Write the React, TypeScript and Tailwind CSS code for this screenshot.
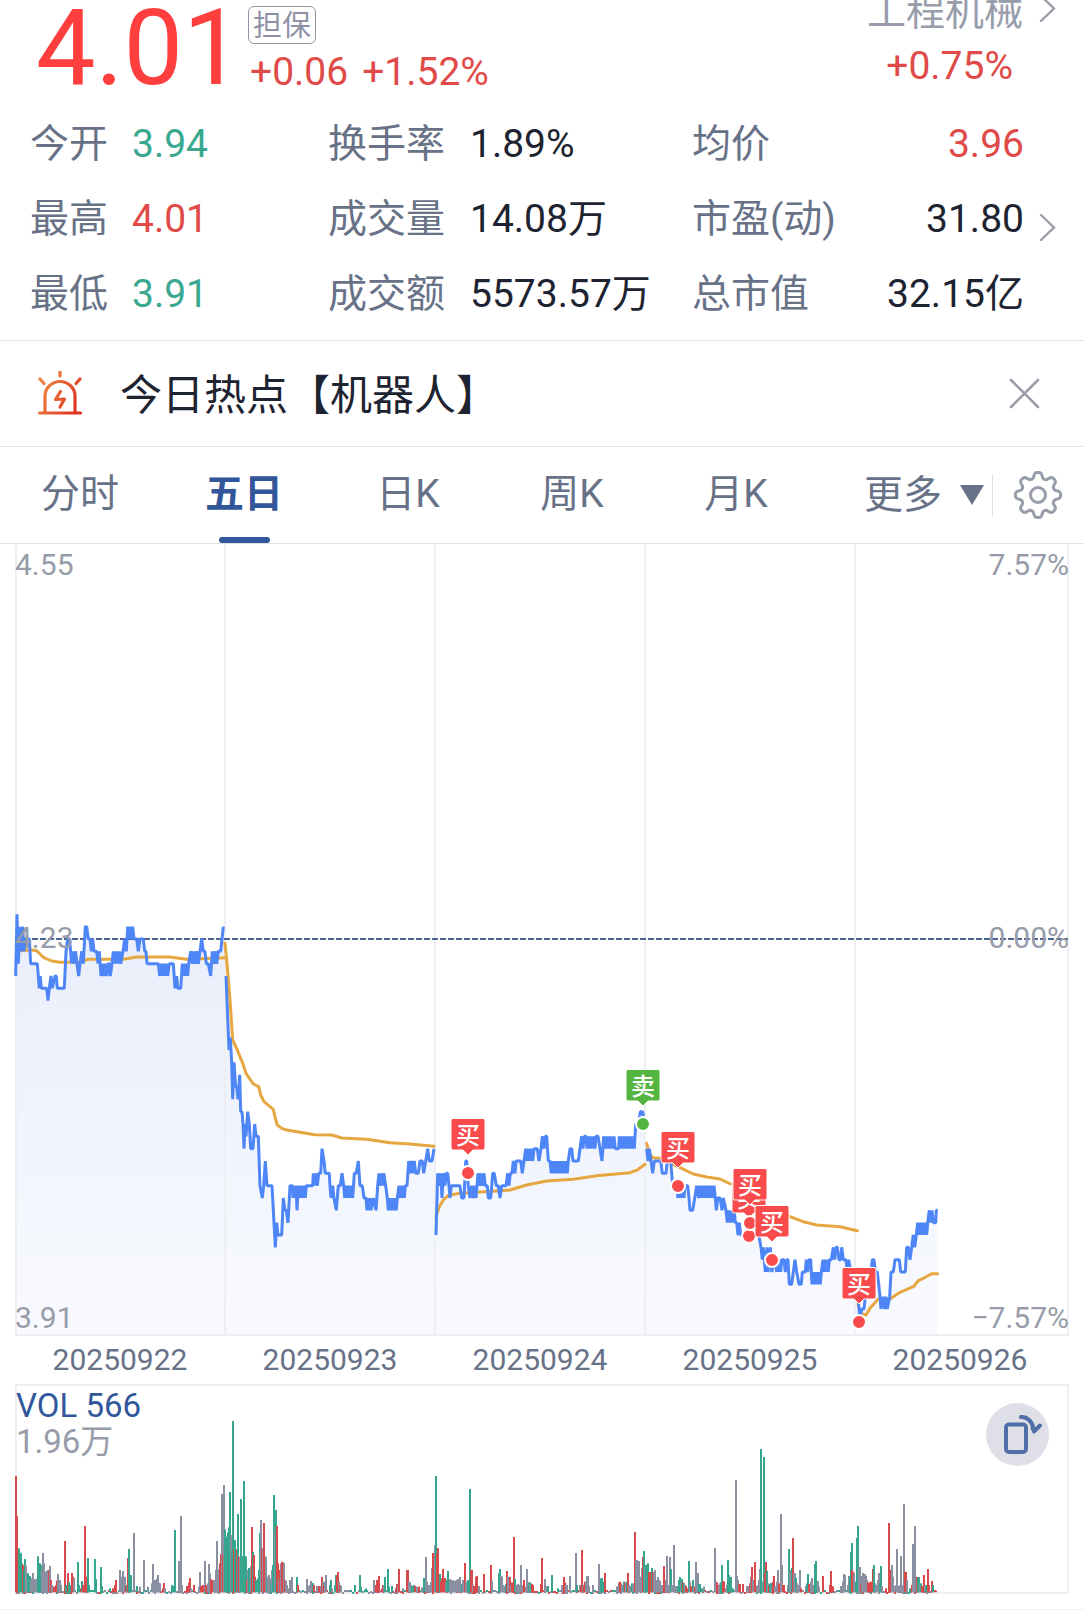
import React from "react";

type Point = [number, number];

const BLUE = "#4f86f7";
const ORANGE = "#e6a740";

/* ---------- price data ---------- */

const TICK = 37 / 3;
const BASE_Y = 939;

// "x,k" is one quote, "x1-x2,a,b" is a stretch that swings between a and b.
// x is counted in thirds of a pixel, k in ticks below the reference price.
function parseDay(origin: number, source: string): Point[] {
  const points: Point[] = [];
  source
    .trim()
    .split(/\s+/)
    .forEach((token) => {
      const [span, a, b] = token.split(",");
      if (span.includes("-")) {
        const [from, to] = span.split("-").map(Number);
        let flip = false;
        for (let x = from; x <= to; x += 3) {
          points.push([origin + x / 3, BASE_Y + Number(flip ? b : a) * TICK]);
          flip = !flip;
        }
      } else {
        points.push([origin + Number(span) / 3, BASE_Y + Number(a) * TICK]);
      }
    });
  return points;
}

const priceDays: Point[][] = [
  parseDay(
    0,
    `47,3 51,m 55,2 60,n 64,1 68,n 72,1 76,0 88,0 92,2 112,2 118,4 121,3 124,4 140,4 144,5 148,4 153,3 157,4 165,3 169,3 172,4
     193,4 198,1 203,0 208,0 212,1 215,2 218,1 222,2 227,1 231,2 236,3 240,2 245,1 250,2 256,n 260,n 265,0 270,0 274,1 278,0 282,1
     290,1 294,2 298,1 303,3 308,2 312,3 316,2 320,3 324,2 328,2 331,3 336,2 340,1 344-364,2,1 369,1 374,0 379,1 383,n 387,0 391,n 395,0 398,n 402,0
     410,0 415,1 420,0 430,0 434,1 438,1 441,2 475,2 479-505,3,2 508,2 520,2 525,4 530,3 533,4 542,4 547,2 551-568,3,2 572,1 577,2 581,1
     585,2 590,1 595,2 600,1 605,0 610,1 615,1 619,2 625,2 632,3 637,1 641,2 646,1 650,2 655,1 662,1 666,0 670,n`
      .replace(/,m/g, ",-2")
      .replace(/,n/g, ",-1"),
  ),
  [
    ...parseDay(
      0,
      `678,3 684,7 687,9 691,8 695,10 698,13 702,10 707,12 710,12 714,13 719,11 722,14 726,14 729,15 732,17 735,15 738,16 743,14 748,15
       752,17 759,17 764,15 768,16 775,16 780,20 787,21 791,20 796,18 801,20 816,20 822,23 826,25 830,23 834,24 845,24`,
    ),
    ...parseDay(
      220,
      `190,21 195,22 199,22 204,23 210,20 217,20 219-228,21,20 231,22 235-260,20,21 262,20 278,20 280,19 284,20 287,19 292,20 296,19 302,19
       306,17 312,18 316,19 328,19 330,20 333,21 338,20 342,21 349,22 355,20 361,20 366,19 371,20 374-400,21,20 403,19 409,19 415,18
       420,20 427,20 432,21 438,21 441-455,22,21 460,21 468,22 473,20 477,19 481,20 485,19 488,20 491,19 497,20 502,21 505-533,22,21
       537,20 541-556,21,20 561,20 566,18 571,19 575,18 579,19 583,18 587,19 595,19 600,18 607,18 611,19 617,18 623,17 628,18 636,18 642,17`,
    ),
  ],
  parseDay(
    430,
    `18,24 23,19 28,20 32,19 36,21 40,19 45,20 49,19 53,19 57,20 60,21 64,20 90,20 95,21 102,21 107,18 110,18 115,20 120,21 125,20
     130,21 134,20 138,21 144,19 149,20 153,19 157,20 162,19 166,20 172,20 175,21 182,21 188,19 193,19 199,20 205,20 210,21 215,20
     228,20 233,19 237,20 241,19 246,19 250,18 255,19 258,18 272,18 277,19 282,18 287-308,17,18 312,17 322,17 327,18 333,17 337,16
     342,17 346,16 350,16 355,18 360,18 364-417,19,18 420,17 425,17 429,18 445,18 450,17 455,16 459,17 463,16 468-500,16,17 504,16
     510,17 516,18 521,16 525-553,17,16 556,17 566,17 568-614,16,17 617,15 626,15 631,14 638,14 643,15`,
  ),
  parseDay(
    640,
    `20,17 24,18 28,17 33,18 38,19 43,18 62,18 67,19 78,19 82,18 92,18 98,20 110,20 114-135,21,20 138,20 143,20 147,21 150,22 158,22
     164,21 170,20 176,21 180-222,20,21 226,21 229,22 233,21 240,21 246,22 250,21 258,22 262-283,23,22 286,23 290,23 294,24 298,23 302,24
     320,24 340,23 356,24 363,25 367,26 370,25 376,27 381,25 384,27 391,25 395,27 405,26 410-427,27,26 432,26 436,27 440,26 444,26
     448,28 455,28 460,27 465,26 470,27 477,28 484,28 487,27 496,27 499,26 503,27 507,26 512,26 516,28 520-545,27,28 549,26 553-570,27,26
     574,26 580,25 584,26 588,25 592,25 597,26 602,26 605,25 610,26 618,26 622,27 626,26 632,27 645,28`,
  ),
  parseDay(
    640,
    `655,29 657,30 660,31 665,30 672,30 676,29 684,28 690,28 697,26 702,26 706,27 712,27 716,28 720,29 723,30 730,29 734,30 738,29
     742,30 749,29 753,27 760,27 765,26 778,26 782,27 796,27 800,25 805,25 810,26 815,25 820,24 824,25 829,24 833-863,23,24 868,22
     872,23 876,22 880,23 887,23 889,22 893,22`,
  ),
];

function scaled(ox: number, oy: number, pairs: Point[]): Point[] {
  return pairs.map(([x, y]) => [ox + x / 3, oy + y / 3]);
}

const averageLines: Point[][] = [
  scaled(0, 880, [
    [50, 190], [65, 212], [90, 209], [110, 212], [130, 232], [155, 243], [180, 247], [240, 246], [265, 238],
    [370, 238], [410, 231], [510, 231], [560, 238], [600, 236], [675, 233],
  ]),
  [
    ...scaled(0, 880, [
      [675, 190], [680, 240], [690, 360], [698, 480], [712, 510], [728, 550], [738, 580], [760, 612], [776, 620],
      [782, 645], [792, 665], [820, 688], [826, 715], [832, 735], [845, 745], [860, 750], [900, 757],
    ]),
    ...scaled(220, 1080, [[285, 164], [335, 165], [365, 174], [440, 178], [510, 188], [570, 192], [642, 199]]),
  ],
  scaled(430, 1050, [
    [18, 500], [28, 470], [40, 450], [55, 436], [90, 430], [200, 423], [240, 420], [290, 405], [350, 393],
    [430, 388], [500, 377], [600, 368], [622, 360], [645, 343],
  ]),
  scaled(640, 1100, [[20, 130], [28, 160], [38, 173], [62, 175], [125, 205], [160, 222], [200, 231], [240, 237], [272, 252]]),
  scaled(640, 1100, [[430, 342], [450, 350], [490, 365], [530, 375], [600, 380], [652, 392]]),
  scaled(640, 1100, [
    [654, 610], [660, 640], [678, 645], [690, 625], [715, 597], [750, 597], [780, 577], [820, 560], [835, 542],
    [850, 535], [875, 521], [893, 521],
  ]),
];

const toPath = (points: Point[]) =>
  points.map(([x, y], i) => `${i ? "L" : "M"}${x.toFixed(1)} ${y.toFixed(1)}`).join("");

const allQuotes = priceDays.flat();
const areaPath = `${toPath(allQuotes)}V1334H16Z`;

const markers = [
  { x: 468, y: 1173, label: "买" },
  { x: 643, y: 1124, label: "卖" },
  { x: 678, y: 1186, label: "买" },
  { x: 749, y: 1236, label: "买" },
  { x: 750, y: 1223, label: "买" },
  { x: 772, y: 1260, label: "买" },
  { x: 859, y: 1322, label: "买" },
];

function Marker({ x, y, label }: { x: number; y: number; label: string }) {
  const fill = label === "卖" ? "#55b541" : "#f94b4b";
  return (
    <g transform={`translate(${x} ${y})`}>
      <path
        d="M-15-54.5H15Q17-54.5 17-52.5V-25Q17-23 15-23H5L0-18L-5-23H-15Q-17-23-17-25V-52.5Q-17-54.5-15-54.5Z"
        fill={fill}
        stroke="#fff"
        strokeWidth="1"
      />
      <text x="0" y="-29" textAnchor="middle" fontSize="24" fontWeight="500" fill="#fff">
        {label}
      </text>
      <circle r="7" fill={fill} stroke="#fff" strokeWidth="2" />
    </g>
  );
}

function PriceChart() {
  return (
    <svg viewBox="0 544 1084 792" className="block w-full" role="img" aria-label="五日走势图">
      <defs>
        <linearGradient id="area" gradientUnits="userSpaceOnUse" x1="0" y1="920" x2="0" y2="1334">
          <stop offset="0" stopColor="#e8eefa" />
          <stop offset="1" stopColor="#f9faff" />
        </linearGradient>
      </defs>
      <path d={areaPath} fill="url(#area)" />
      <path d="M16 545V1335M225 545V1335M435 545V1335M645 545V1335M855 545V1335M1068 545V1335M15 1335H1069" stroke="#eeeff2" strokeWidth="2" fill="none" />
      <path d="M16 939H1068" stroke="#4a6494" strokeWidth="2" strokeDasharray="6 2" />
      {averageLines.map((line, i) => (
        <path key={i} d={toPath(line)} fill="none" stroke={ORANGE} strokeWidth="3" strokeLinejoin="round" strokeLinecap="round" />
      ))}
      {priceDays.map((day, i) => (
        <path key={i} d={toPath(day)} fill="none" stroke={BLUE} strokeWidth="3" strokeLinejoin="bevel" />
      ))}
      {markers.map((m) => (
        <Marker key={`${m.x}-${m.y}`} {...m} />
      ))}
    </svg>
  );
}

/* ---------- volume data ---------- */

// Each bar: x in thirds of a pixel, direction (r up, g down, n flat), top edge.
const volumeParts: [number, string][] = [
  [
    0,
    `48r438 51r558 54r690 57g655 60g668 63g670 66g700 69r705 72g720 75g687 78n708 81n730 84g730 87g740 90g738 93n750 96n745 99n729
     102n747 105n748 108n750 111n745 114g679 117g700 120g700 123g705 126n720 129n669 132n700 135n738 138n725 141n722 144n720 147r722
     150n708 153r750 156n765 162r770 168r765 171r752 174n732 177n750 180n750 183n765 195r633 198g765 204r729 207g757 213g765 216r729
     219r740 222n744 234g696 237g765 243r775 246g753 249r765 255r588 258r740 264g684 267g765 285g687 288g747 303g711 306g768 330g775
     339r775 345r765 348r750 360n720 366n740 369n723 372n740 375n741 378r768 381g765 384r684 387g657 390g735 393g735 402n609 411g768
     420n770 432n690 444n770 456n760 459n702 462n750 465n760 468n750 471n745 474n735 477n758 480n760 489r775 492r759 495n775 516g765
     519g770 522g768 525g600 537n693 540n693 543n558 546n765 561r768 567r758 570r744 573n775 582r765 597n770 600n726 603r768 606r768
     609r765 615n693 618r765 624n760 627n702 630n730 633r748 636r750 642n750 648n720 651n633 654n720 657n718 660r700 663r672 666n492
     669r672 672n465 675g598 678g620 681g640 684g608 687g592 690g486 693n615 696g660 699g273 702r657 705g630 708g657 711r660 714g552
     717r680 720n682 723g507 726g678 729g680 732g453 735g678 738g680 741r750 744n720 747g714 750g715 753n708 756r591 759g666 762r675
     765r740 768g750 774g745 777g720 780g609 783n570 786r655 789n655 792r579 795r680 798n680 801g750 804n740 807n735 810n745 813g760
     816n720 819g705 822g495 825n600 828g540 831r588 834r700 837n745 840r720 843n700 846r696 849r697 852n699 855r750 858n753 861n765
     864n775 870n750 876n741 891g741 894r765 921n747 924n768 930n765 933n753 936n765 939g759 942r765 951n768 957r768 963n768 966r741
     969n755 972r765 975n755 978n735 990g765 993g750 996n775 1005g765 1008g735 1011r738 1014r726 1017n755 1020r765 1023n768 1065g765
     1080g735 1083g770`,
  ],
  [
    1086,
    `12g775 36n750 42r765 45r750 48r750 51r738 60r775 63r765 66n765 69g741 78g717 81g770 90g768 102r775 105r762 108n765 111r717 123n775
     135r720 138r720 141n755 144n757 147n765 150g768 156g765 159r768 165n770 171r770 180n772 186g744 189g745 192n681 195n755 198n765
     204n765 207n757 210n714 213r669 216r675 219n645 222g438 225r672 228r654 231r740 234g732 237r755 240r745 243r717 246r745 249r744
     252n756 255g750 258g723 261g750 264n747 267n750 270n750 273n752 276n752 279n752 282n753 285n750 288n747 291n750 294n741 297n765
     300g762 303n750 306n765 309r699 312n755 315n765 318g750 321g768 324g477 327r720 330r720 333n765 336r768 339r768 342r740 345r738
     351n768 366r732 387r705 390n753 411g729 414g717 417n738 420n740 423n765 426n768 432g762 435r723 438n740 441n762 444r741 447n765
     450r757 453r760 456r621 459g747 462n765 465n768 468n762 471n765 477n705 480n765 486r750 492n770 495n717 498n760 501g757 504n757
     507g760 510r762 513r765 537r762 540r684 549n747 552n768 558g768 570g735 588g775 600n765 603n768 606r741 609r757 612n765 615n765
     624n738 642n669 645g765 654n765 657r768 660r660 663n765 666r765 669r755 672n755 675n738 678n738 681n768 693n765 711n702 717g745
     720g744 726g755 729r729 765n770 768n768 771n757 774r755 777r760 780n765 783n768 786g755 789r758 792n757 795g755 798r729 801n765
     804n768 810g760 813n765 816n760 819r606 822n690 825n690 828n693 831n693 834n750 837n740 840n714 843r681 846g663 849n710 852g705
     855g705 858g700 861r726 864r726 867r730 870g714 873r726 876n728 879n720 882n750 885n765 888n741 891n750 894n753 897n765 903n765
     906r708 909r765 912n750 915n678 918n765 924n681 927g717 930n765 936n645 939n768 945n768 948g768 951g750 954g741 957n755 960g747
     963r757 966g760 969n765 972r768 975r775 981g693 984n755 987r768 993g750 996n770 999r770 1002n696 1005n730 1008n729 1011g762
     1014g762 1020g775 1026n770 1059n654 1062n755 1065r757 1068r765 1071n768 1074n760 1077g757 1080g705`,
  ],
  [
    2166,
    `3r754 6r754 12n775 15n765 18g690 21g735 24g741 27g741 33g775 42n450 45n738 48n750 51r765 54r762 63r762 75n768 81n768 84r760 87n740
     90r711 93n750 99r696 105n768 108n765 111n750 114n717 117g357 120g755 123n755 126g381 129r730 132r696 135g723 138n760 141r768
     144g762 147g759 150n768 153r755 156r738 159n768 165n755 168n720 171r760 177n552 180n705 183r765 186r765 198n765 201g657 204n726
     207n720 210g714 213r624 216n730 219n729 222g744 225n760 228n768 231n765 234n720 237r775 252n768 255g760 258g732 261r762 267n755
     270n744 276n765 279g702 282g693 285g755 288n753 291n770 303r738 324r765 327r723 330r768 333r770 357n768 363n755 366n732 369n735
     378n765 381n738 384g738 387g666 390g639 390r720 393r725 396n729 399n765 402g755 405g624 408g588 411n711 414n711 417r762 420n738
     423n729 426n732 429n732 432n738 435n750 438r757 441r759 444r757 447r755 450r760 453r717 456g705 459g760 462n765 468n750 471n729
     474g760 477g708 480n768 492r775 501r579 504r720 507r720 510n705 513n740 516n768 522n765 525n657 528n768 534n765 537n678 540n765
     546n522 549r725 552r726 555n750 564g775 570r765 573n642 576n645 579n588 582n740 585r741 588g745 591g741 594n762 597g760 600r768
     606r735 609n768 612g765 618r717 621r765 630r753 633g765 642r782`,
  ],
];

const volumeColors: Record<string, string> = { r: "#d9494b", g: "#36a58e", n: "#8a8fa1" };

const volumeBars = volumeParts.flatMap(([offset, source]) =>
  source
    .trim()
    .split(/\s+/)
    .map((token) => {
      const [, x, kind, top] = /(\d+)([rgn])(\d+)/.exec(token) as RegExpExecArray;
      return { x: (offset + Number(x)) / 3 - 1, y: 1330 + Number(top) / 3, kind };
    }),
);

// Thin trades along the base line between the larger bars.
const thinBars = Array.from({ length: 460 }, (_, i) => {
  const seed = (i * 7919 + ((i * i) % 613) * 31) % 101;
  return {
    x: 16 + i * 2,
    y: seed % 3 === 0 ? 1592 : 1590 + (seed % 2),
    kind: "nrgngnrn"[seed % 8],
  };
});

function VolumeChart() {
  return (
    <svg viewBox="0 1384 1084 225" className="block w-full" role="img" aria-label="成交量">
      <path d="M16 1385H1068V1593H16Z" fill="none" stroke="#eeeff2" strokeWidth="2" />
      {thinBars.map((b, i) => (
        <rect key={i} x={b.x} y={b.y} width="2" height="2" fill={volumeColors[b.kind]} />
      ))}
      {volumeBars.map((b, i) => (
        <rect key={i} x={b.x} y={b.y} width="2" height={1592.3 - b.y} fill={volumeColors[b.kind]} />
      ))}
    </svg>
  );
}

/* ---------- icons ---------- */

function Chevron() {
  return (
    <svg width="17" height="29" viewBox="0 0 17 29" fill="none" stroke="#9a9da8" strokeWidth="2.4" strokeLinecap="round" aria-hidden="true">
      <path d="M2 2L15 14.5L2 27" />
    </svg>
  );
}

function SirenIcon() {
  return (
    <svg width="46" height="46" viewBox="0 0 46 46" fill="none" stroke="url(#siren)" strokeWidth="3.2" strokeLinecap="round" strokeLinejoin="round" aria-hidden="true">
      <defs>
        <linearGradient id="siren" gradientUnits="userSpaceOnUse" x1="4" y1="20" x2="42" y2="40">
          <stop offset="0" stopColor="#ee8040" />
          <stop offset="1" stopColor="#dc2f1f" />
        </linearGradient>
      </defs>
      <path d="M2.5 42H43.5M8 41V25A15 14.5 0 0 1 38 25V41M23 0.8V5M3 8L7 12.500M43 8L39 12.500" />
      <path d="M23.5 20.500L18.500 28.500L27.500 28L23 36" />
    </svg>
  );
}

const gearPath =
  Array.from({ length: 145 }, (_, i) => {
    const t = (i / 144) * Math.PI * 2;
    const wave = Math.tanh(1.6 * (Math.cos(8 * t) + 0.1)) / Math.tanh(1.76);
    const r = 19.7 + 2.9 * wave;
    return `${i ? "L" : "M"}${(25 + r * Math.sin(t)).toFixed(2)} ${(25 - r * Math.cos(t)).toFixed(2)}`;
  }).join("") + "Z";

function GearIcon() {
  return (
    <svg width="50" height="50" viewBox="0 0 50 50" fill="none" stroke="#989dab" strokeWidth="3" strokeLinejoin="round" aria-hidden="true">
      <path d={gearPath} />
      <circle cx="25" cy="25" r="7.5" />
    </svg>
  );
}

function RotateIcon() {
  return (
    <svg width="63" height="63" viewBox="0 0 63 63" fill="none" stroke="#4f6fa6" strokeWidth="4" strokeLinecap="round" strokeLinejoin="round" aria-hidden="true">
      <rect x="20" y="21.500" width="20" height="27.500" rx="3" />
      <path d="M35 14C42 13.500 47 19.500 48 28.500L54 22.500M48 28.500L46.500 25" />
    </svg>
  );
}

/* ---------- page ---------- */

const tone = { up: "text-[#e04a48]", down: "text-[#3aa78f]", plain: "text-[#1d2331]" };

const stats: { label: string; value: string; tone: keyof typeof tone }[][] = [
  [
    { label: "今开", value: "3.94", tone: "down" },
    { label: "换手率", value: "1.89%", tone: "plain" },
    { label: "均价", value: "3.96", tone: "up" },
  ],
  [
    { label: "最高", value: "4.01", tone: "up" },
    { label: "成交量", value: "14.08万", tone: "plain" },
    { label: "市盈(动)", value: "31.80", tone: "plain" },
  ],
  [
    { label: "最低", value: "3.91", tone: "down" },
    { label: "成交额", value: "5573.57万", tone: "plain" },
    { label: "总市值", value: "32.15亿", tone: "plain" },
  ],
];

const labelWidths = ["w-[102px]", "w-[142px]", "flex-1"];

const tabs = ["分时", "五日", "日K", "周K", "月K"];
const dates = ["20250922", "20250923", "20250924", "20250925", "20250926"];

export default function App() {
  return (
    <main className="min-h-screen overflow-hidden bg-white font-[Roboto,'Noto_Sans_CJK_SC',sans-serif] text-[39px] leading-[40px] text-[#687287]">
      <section className="border-b border-[#dfe0e3]">
        <div className="flex h-[102px] items-start justify-between pr-7 pl-9">
          <div className="flex items-start">
            <strong className="w-[212px] text-[106px] leading-[96px] font-normal text-[#ff3e3e]">4.01</strong>
            <div className="flex flex-col items-start pt-[6px]">
              <span className="flex h-[38px] items-center rounded-md border border-[#9294a6] px-1 pt-[2px] text-[29px] leading-[30px] text-[#8f92a6]">
                担保
              </span>
              <span className="flex gap-[14px] pt-2 pl-[2px] text-[#e04a48]">
                <span>+0.06</span>
                <span>+1.52%</span>
              </span>
            </div>
          </div>
          <div className="-mt-4 flex flex-col items-end">
            <a href="#sector" className="flex items-center gap-4 text-[#989dab]">
              <span className="pt-2">工程机械</span>
              <Chevron />
            </a>
            <span className="pt-[14px] pr-[43px] text-[#e04a48]">+0.75%</span>
          </div>
        </div>
        <div className="relative pt-1 pb-[9px]">
          {stats.map((row, r) => (
            <dl key={r} className="grid h-[75px] grid-cols-[298fr_364fr_332fr] items-center pr-[60px] pl-[30px]">
              {row.map((item, c) => (
                <div key={item.label} className="flex whitespace-nowrap">
                  <dt className={labelWidths[c]}>{item.label}</dt>
                  <dd className={tone[item.tone]}>{item.value}</dd>
                </div>
              ))}
            </dl>
          ))}
          <button type="button" aria-label="更多行情" className="absolute top-[111px] right-7">
            <Chevron />
          </button>
        </div>
      </section>

      <section className="flex h-[106px] items-center border-b border-[#dfe0e3] pr-11 pl-[37px]">
        <SirenIcon />
        <p className="flex-1 pt-1 pl-[37px] text-[42px] leading-[48px] text-[#1d2331]">今日热点【机器人】</p>
        <button type="button" aria-label="关闭">
          <svg width="31" height="31" viewBox="0 0 31 31" fill="none" stroke="#9a9da8" strokeWidth="2.6" strokeLinecap="round" aria-hidden="true">
            <path d="M2 2L29 29M29 2L2 29" />
          </svg>
        </button>
      </section>

      <nav className="grid h-[97px] grid-cols-[repeat(5,164fr)_172fr_92fr] border-b border-[#dfe0e3]">
        {tabs.map((tab) =>
          tab === "五日" ? (
            <button key={tab} type="button" aria-current="page" className="relative flex items-center justify-center pr-1 pb-[2px] font-bold text-[#31579a]">
              {tab}
              <span className="absolute bottom-0 h-[6px] w-[51px] rounded-full bg-[#31579a]" />
            </button>
          ) : (
            <button key={tab} type="button" className="flex items-center justify-center pr-1 pb-[2px]">
              {tab}
            </button>
          ),
        )}
        <button type="button" className="flex items-center justify-end gap-[18px] pr-2">
          更多
          <svg width="24" height="20" viewBox="0 0 24 20" fill="#687287" aria-hidden="true">
            <path d="M0 0H24L12 20Z" />
          </svg>
        </button>
        <button type="button" aria-label="设置" className="flex items-center">
          <span className="h-[42px] w-px bg-[#dfe0e3]" />
          <span className="flex flex-1 justify-center pr-[2px]">
            <GearIcon />
          </span>
        </button>
      </nav>

      <section className="relative">
        <PriceChart />
        <div className="absolute inset-0 flex flex-col justify-between px-[15px] pt-[3px] text-[30px] leading-[36px] text-[#979caa]">
          <div className="flex justify-between">
            <span>4.55</span>
            <span>7.57%</span>
          </div>
          <div className="flex justify-between pb-2">
            <span>4.23</span>
            <span>0.00%</span>
          </div>
          <div className="flex justify-between">
            <span>3.91</span>
            <span>−7.57%</span>
          </div>
        </div>
      </section>

      <div className="grid h-[48px] grid-cols-5 pr-[19px] pl-[15px] text-center text-[30px] leading-[48px]">
        {dates.map((d) => (
          <time key={d}>{d}</time>
        ))}
      </div>

      <section className="relative border-b border-[#f1f1f3]">
        <VolumeChart />
        <div className="absolute top-1 left-4 flex flex-col text-[33px] leading-[36px]">
          <span className="text-[#31579a]">VOL 566</span>
          <span className="text-[#979caa]">1.96万</span>
        </div>
        <button type="button" aria-label="横屏" className="absolute top-[19px] right-[35px] rounded-full bg-[#dfe0e7]">
          <RotateIcon />
        </button>
      </section>
    </main>
  );
}
